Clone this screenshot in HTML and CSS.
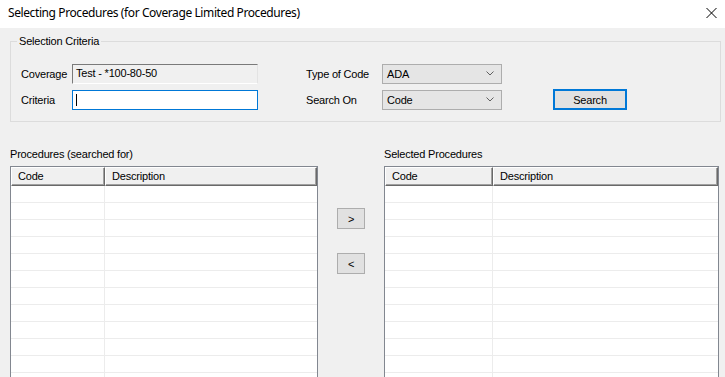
FILE: index.html
```html
<!DOCTYPE html>
<html>
<head>
<meta charset="utf-8">
<title>Selecting Procedures</title>
<link rel="stylesheet" href="styles.css">
</head>
<body>
<div class="window">
  <header class="titlebar">
    <span class="title">Selecting Procedures (for Coverage Limited Procedures)</span>
    <svg class="close" width="11" height="10" viewBox="0 0 11 10"><path d="M0.5 0 L10.5 10 M10.5 0 L0.5 10" stroke="#000" stroke-width="1" fill="none"/></svg>
  </header>
  <main class="content">
    <fieldset class="group">
      <legend>Selection Criteria</legend>
      <div class="criteria">
        <span class="lbl c1 r1">Coverage</span>
        <div class="textbox readonly c2 r1">Test - *100-80-50</div>
        <span class="lbl c4 r1">Type of Code</span>
        <div class="combo c5 r1"><span>ADA</span><svg class="chev" width="8" height="5" viewBox="0 0 8 5"><polyline points="0.5,0.5 4,4 7.5,0.5" fill="none" stroke="#606060" stroke-width="1"/></svg></div>
        <span class="lbl c1 r2">Criteria</span>
        <div class="textbox focused c2 r2"><span class="caret"></span></div>
        <span class="lbl c4 r2">Search On</span>
        <div class="combo c5 r2"><span>Code</span><svg class="chev" width="8" height="5" viewBox="0 0 8 5"><polyline points="0.5,0.5 4,4 7.5,0.5" fill="none" stroke="#606060" stroke-width="1"/></svg></div>
        <button class="btn default c7 r2">Search</button>
      </div>
    </fieldset>
    <div class="lists">
      <section class="listcol left">
        <div class="caption">Procedures (searched for)</div>
        <div class="listview">
          <div class="lv-header"><div class="hcell code">Code</div><div class="hcell desc">Description</div></div>
          <div class="lv-row"><div class="cell code"></div><div class="cell desc"></div></div>
          <div class="lv-row"><div class="cell code"></div><div class="cell desc"></div></div>
          <div class="lv-row"><div class="cell code"></div><div class="cell desc"></div></div>
          <div class="lv-row"><div class="cell code"></div><div class="cell desc"></div></div>
          <div class="lv-row"><div class="cell code"></div><div class="cell desc"></div></div>
          <div class="lv-row"><div class="cell code"></div><div class="cell desc"></div></div>
          <div class="lv-row"><div class="cell code"></div><div class="cell desc"></div></div>
          <div class="lv-row"><div class="cell code"></div><div class="cell desc"></div></div>
          <div class="lv-row"><div class="cell code"></div><div class="cell desc"></div></div>
          <div class="lv-row"><div class="cell code"></div><div class="cell desc"></div></div>
          <div class="lv-row"><div class="cell code"></div><div class="cell desc"></div></div>
          <div class="lv-row"><div class="cell code"></div><div class="cell desc"></div></div>
        </div>
      </section>
      <div class="movers">
        <button class="btn mover">&gt;</button>
        <button class="btn mover">&lt;</button>
      </div>
      <section class="listcol right">
        <div class="caption">Selected Procedures</div>
        <div class="listview">
          <div class="lv-header"><div class="hcell code">Code</div><div class="hcell desc">Description</div></div>
          <div class="lv-row"><div class="cell code"></div><div class="cell desc"></div></div>
          <div class="lv-row"><div class="cell code"></div><div class="cell desc"></div></div>
          <div class="lv-row"><div class="cell code"></div><div class="cell desc"></div></div>
          <div class="lv-row"><div class="cell code"></div><div class="cell desc"></div></div>
          <div class="lv-row"><div class="cell code"></div><div class="cell desc"></div></div>
          <div class="lv-row"><div class="cell code"></div><div class="cell desc"></div></div>
          <div class="lv-row"><div class="cell code"></div><div class="cell desc"></div></div>
          <div class="lv-row"><div class="cell code"></div><div class="cell desc"></div></div>
          <div class="lv-row"><div class="cell code"></div><div class="cell desc"></div></div>
          <div class="lv-row"><div class="cell code"></div><div class="cell desc"></div></div>
          <div class="lv-row"><div class="cell code"></div><div class="cell desc"></div></div>
          <div class="lv-row"><div class="cell code"></div><div class="cell desc"></div></div>
        </div>
      </section>
    </div>
  </main>
</div>
</body>
</html>
```

FILE: styles.css
```css
* { box-sizing: border-box; }
html, body { margin: 0; padding: 0; }
body {
  background: #f0f0f0;
  font-family: "Liberation Sans", Arial, sans-serif;
  font-size: 11px;
  letter-spacing: -0.2px;
  color: #000;
  overflow: hidden;
}
.window {
  width: 725px;
  height: 377px;
  overflow: hidden;
  display: flex;
  flex-direction: column;
}
.titlebar {
  flex: none;
  height: 28px;
  background: #fff;
  display: flex;
  align-items: flex-start;
  justify-content: space-between;
  padding: 0 8px;
}
.title {
  font-family: "Noto Sans", "Open Sans", sans-serif;
  font-size: 12px;
  letter-spacing: -0.4px;
  line-height: 16px;
  margin-top: 5px;
}
.close { margin-top: 8px; }
.content { flex: 1; }

.group {
  margin: 6px 0 0 10px;
  width: 711px;
  border: 1px solid #dcdcdc;
  padding: 0;
  min-width: 0;
}
.group legend {
  margin-left: 6px;
  padding: 0 2px;
  line-height: 14px;
  font-size: 11px;
}
.criteria {
  display: grid;
  grid-template-columns: 51px 186px 48px 76px 120px 51px 74px;
  grid-template-rows: 20px 20px;
  row-gap: 6px;
  padding: 16px 0 11px 10px;
  align-items: center;
}
.c1 { grid-column: 1; }
.c2 { grid-column: 2; }
.c4 { grid-column: 4; }
.c5 { grid-column: 5; }
.c7 { grid-column: 7; }
.r1 { grid-row: 1; }
.r2 { grid-row: 2; }
.lbl { white-space: nowrap; line-height: 14px; }

.textbox {
  height: 20px;
  display: flex;
  align-items: center;
  padding-left: 3px;
  line-height: 14px;
}
.textbox.readonly {
  background: #f0f0f0;
  border-top: 1px solid #7a7a7a;
  border-left: 1px solid #7a7a7a;
  border-right: 1px solid #e3e3e3;
  border-bottom: 1px solid #ffffff;
  padding-bottom: 2px;
}
.textbox.focused {
  background: #fff;
  border: 1px solid #0078d7;
}
.caret {
  display: block;
  width: 1px;
  height: 12px;
  background: #000;
}
.combo {
  height: 20px;
  background: #e5e5e5;
  border: 1px solid #adadad;
  display: flex;
  align-items: center;
  justify-content: space-between;
  padding: 0 7px 0 4px;
  line-height: 14px;
}
.chev { display: block; margin-top: -1px; }

.btn {
  font-family: "Liberation Sans", Arial, sans-serif;
  font-size: 11px;
  letter-spacing: -0.2px;
  color: #000;
  background: #e1e1e1;
  border: 1px solid #adadad;
  padding: 0;
  margin: 0;
  display: flex;
  align-items: center;
  justify-content: center;
  line-height: 14px;
}
.btn.default {
  border: 2px solid #0078d7;
  height: 21px;
  margin-top: -1px;
  align-self: start;
}

.lists {
  display: flex;
  align-items: flex-start;
  margin: 25px 0 0 10px;
}
.listcol { display: flex; flex-direction: column; }
.listcol.left { width: 308px; }
.listcol.right { width: 335px; }
.caption { line-height: 14px; margin-bottom: 5px; }
.movers {
  width: 28px;
  margin: 0 19px;
  padding-top: 61px;
  display: flex;
  flex-direction: column;
  gap: 24px;
}
.btn.mover { width: 28px; height: 21px; }

.listview {
  border: 1px solid #828790;
  background: #fff;
  height: 240px;
  overflow: hidden;
}
.lv-header {
  display: flex;
  height: 19px;
}
.hcell {
  background: #f0f0f0;
  border-top: 1px solid #fff;
  border-left: 1px solid #fff;
  border-right: 1px solid #696969;
  border-bottom: 1px solid #696969;
  box-shadow: inset -1px -1px 0 #a0a0a0;
  padding-left: 6px;
  line-height: 16px;
  white-space: nowrap;
}
.hcell.desc { flex: 1; }
.left .code { width: 94px; }
.right .code { width: 108px; }
.lv-row { display: flex; height: 17px; }
.cell { border-bottom: 1px solid #ececec; }
.cell.code { border-right: 1px solid #ececec; }
.cell.desc { flex: 1; }
```
